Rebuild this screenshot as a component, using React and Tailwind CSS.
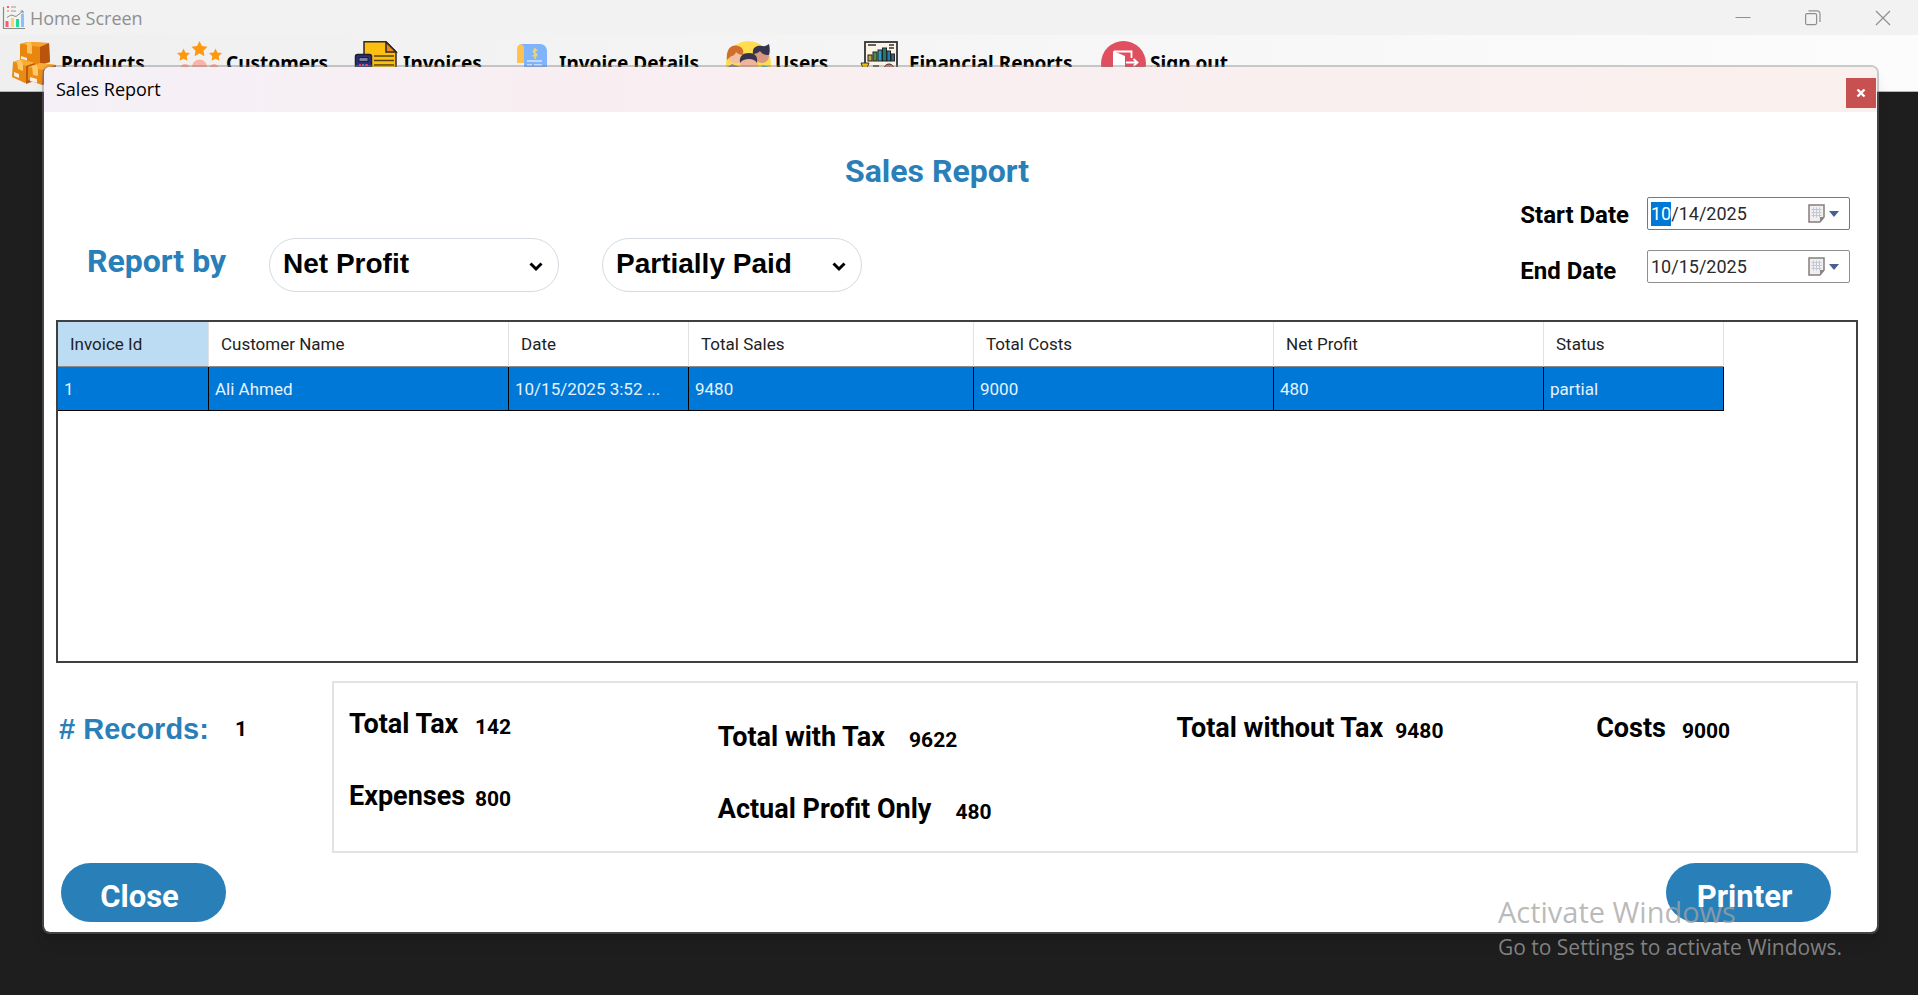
import { useEffect, useRef } from 'react';

const uiFont = "font-['Open_Sans','Noto_Sans',sans-serif]";

function AppIcon() {
  return (
    <svg width="24" height="24" viewBox="0 0 24 24" aria-hidden="true">
      <path d="M1.5 1v21.5H23" fill="none" stroke="#8a8a8a" strokeWidth="1.2" />
      <rect x="3.500" y="15" width="3" height="6" fill="#ff5a6e" />
      <rect x="9" y="12" width="3" height="9" fill="#fcd36a" />
      <rect x="14" y="13" width="3" height="8" fill="#22d89a" />
      <rect x="19" y="8" width="3" height="13" fill="#86c2ff" />
      <path d="M5 11.500l4-2.500 5 1.500 7-5.500M18.500 5H21v2.500" fill="none" stroke="#8a8a8a" />
      <path d="M5 0h2v2H5z" fill="#ff5a6e" />
      <path d="M5 4h2v2H5z" fill="#fcb75a" />
      <path d="M9 1h5M9 5h5" stroke="#9a9a9a" />
    </svg>
  );
}

function Boxes() {
  return (
    <svg width="45" height="45" viewBox="0 0 45 45" aria-hidden="true">
      <path d="M8 3l8-2 21 1 1 19-13 4-17-5z" fill="#e8860f" />
      <path d="M8 3l8-2 21 1-9 4z" fill="#f7a428" />
      <path d="M28 6l9-4 1 19-10 3z" fill="#b9540d" />
      <path d="M14 1.500l5-.5 1 5v7l-5-1V5z" fill="#ffc35a" />
      <path d="M9 15l6 2v4l-6-2z" fill="#fbeee0" />
      <path d="M1 21l9-3 13 4-1 18-9 2L0 36z" fill="#e98a13" />
      <path d="M1 21l9-3 13 4-9 3z" fill="#f9ab34" />
      <path d="M14 25l9-3-1 18-8 3z" fill="#bd5a10" />
      <path d="M5 20l4-1 2 5v6l-5-2z" fill="#ffc766" />
      <path d="M2 31l5 2v4l-5-2z" fill="#fbeee0" />
      <path d="M16 26l12-4 16 2-1 16-13 4-14-5z" fill="#ea8c15" />
      <path d="M16 26l12-4 16 2-13 5z" fill="#f9ab34" />
      <path d="M31 29l13-5-1 16-13 4z" fill="#b9540d" />
      <path d="M20 25l5-1 1 5v6l-5-1z" fill="#ffc766" />
      <path d="M18 36l7 2v4l-7-2z" fill="#fbeee0" />
    </svg>
  );
}

function Stars() {
  return (
    <svg width="45" height="45" viewBox="0 0 45 45" aria-hidden="true">
      <path d="M22.500 0l2.400 5 5.600.8-4 3.900 1 5.500-5-2.600-5 2.600 1-5.500-4-3.900 5.600-.8z" fill="#ff9811" />
      <path d="M6.500 7.500l1.900 4 4.600.6-3.300 3.200.8 4.500-4-2.100-4 2.100.8-4.500L0 12.100l4.600-.6z" fill="#ff9811" />
      <path d="M38.500 7.500l1.900 4 4.600.6-3.300 3.200.8 4.500-4-2.100-4 2.100.8-4.500-3.300-3.200 4.600-.6z" fill="#ff9811" />
      <circle cx="22.500" cy="26" r="7.500" fill="#f9b3a7" />
      <circle cx="8" cy="28" r="5" fill="#f9b3a7" />
      <circle cx="37" cy="28" r="5" fill="#f9b3a7" />
    </svg>
  );
}

function InvoiceIcon() {
  return (
    <svg width="45" height="45" viewBox="0 0 45 45" aria-hidden="true">
      <path d="M10 .8h22l10 10V44H10z" fill="#fdbf0f" stroke="#2b2a2c" strokeWidth="1.500" />
      <path d="M32 1v10h10z" fill="#f08a1c" stroke="#2b2a2c" strokeWidth="1.500" />
      <path d="M20 15h20M20 19.500h20M20 24h20" stroke="#55400a" strokeWidth="1.400" />
      <rect x="1.500" y="13.500" width="16" height="26" rx="2" fill="#2c2f7c" stroke="#1d1d33" strokeWidth="1.500" />
      <rect x="5" y="16.500" width="9" height="4" fill="#7d8396" stroke="#1d1d33" />
      <path d="M5 24h2M11 24h3" stroke="#e04646" strokeWidth="2" />
      <path d="M8 24h2" stroke="#7d8396" strokeWidth="2" />
    </svg>
  );
}

function BillIcon() {
  return (
    <svg width="45" height="45" viewBox="0 0 45 45" aria-hidden="true">
      <path d="M12 3c-4 0-5 3-5 6v13h7V8z" fill="#ffc14f" />
      <path d="M11 3h19c4 0 7 3 7 7v32H14V9c0-3-1-5-3-6z" fill="#7fb3fb" />
      <path d="M27.500 9.500c-4-2-5.500 1.800-2.500 2.800s2 4.200-2.500 2.200M25 7v11" fill="none" stroke="#e4d679" strokeWidth="1.600" />
      <path d="M17 20h15M17 24h5M24 24h8" stroke="#d8e8ff" strokeWidth="1.400" />
    </svg>
  );
}

function PeopleIcon() {
  return (
    <svg width="45" height="45" viewBox="0 0 45 45" aria-hidden="true">
      <circle cx="22.500" cy="22.500" r="22.500" fill="#ffdd4f" />
      <circle cx="10" cy="15" r="7.500" fill="#f4bf9e" />
      <path d="M1 19c-1-8 2-15 9-14.500S18 10 17 14c-3 0-5-1-7-3-1 4-5 4-6 5z" fill="#cf6f2b" />
      <circle cx="36" cy="15" r="7" fill="#d9977e" />
      <path d="M27 13c-1-6 3-9 9-8 3 .5 5-.5 7-2 1 4 1 8 0 11-4 0-7-1-9-4-2 2-4 3-7 3z" fill="#34344f" />
      <circle cx="23" cy="24" r="9" fill="#efb49a" />
      <path d="M14 22c-1-7 3-10 9-10s9 3 8 10c-2-3-4-4-8-4s-7 1-9 4z" fill="#34344f" />
      <path d="M0 27l6-4 8 3v15H6z" fill="#8b7fb0" />
      <path d="M36 24l8 2-3 12h-6z" fill="#58b7d8" />
    </svg>
  );
}

function ReportsIcon() {
  return (
    <svg width="45" height="45" viewBox="0 0 45 45" aria-hidden="true">
      <rect x="5" y="1" width="32" height="43" fill="#fbf3e6" stroke="#333" strokeWidth="1.800" />
      <path d="M8 4h8M29 4h5M29 7h5" stroke="#333" strokeWidth="1.500" />
      <rect x="8" y="14" width="4" height="6" fill="#c9a23a" stroke="#222" />
      <rect x="13" y="11" width="4" height="9" fill="#4b8f46" stroke="#222" />
      <rect x="18" y="9" width="4" height="11" fill="#2e9ac0" stroke="#222" />
      <rect x="22.500" y="7" width="4" height="13" fill="#217a70" stroke="#222" />
      <rect x="27" y="10" width="3.500" height="10" fill="#217ca8" stroke="#222" />
      <rect x="31" y="13" width="3.500" height="7" fill="#38618d" stroke="#222" />
      <path d="M1 22h8l-2 5H3z" fill="#f6c20e" stroke="#333" />
      <path d="M13 25h6M12 28h7" stroke="#333" strokeWidth="1.500" />
      <circle cx="29" cy="28" r="5" fill="#e17a6a" stroke="#333" />
    </svg>
  );
}

function SignOutIcon() {
  return (
    <svg width="45" height="45" viewBox="0 0 45 45" aria-hidden="true">
      <circle cx="22.500" cy="22.500" r="22.500" fill="#e04f5f" />
      <path d="M12 10l12 5v21l-12-5z" fill="#fff" />
      <path d="M13 10.500h17.500V17M30.500 26v5H24M25 21.500h11M32.500 18l4 3.500-4 3.500" fill="none" stroke="#fff" strokeWidth="1.800" />
    </svg>
  );
}

const menu = [
  { label: 'Products', Icon: Boxes, width: 'w-[165px]' },
  { label: 'Customers', Icon: Stars, width: 'w-[177px]' },
  { label: 'Invoices', Icon: InvoiceIcon, width: 'w-[156px]' },
  { label: 'Invoice Details', Icon: BillIcon, width: 'w-[216px]' },
  { label: 'Users', Icon: PeopleIcon, width: 'w-[134px]' },
  { label: 'Financial Reports', Icon: ReportsIcon, width: 'w-[241px]' },
  { label: 'Sign out', Icon: SignOutIcon, width: 'w-[165px]' },
];

function TitleBar() {
  return (
    <header className={`flex h-[35px] items-center bg-[#f2f2f2] pl-0.5 text-[#8f8f8f] ${uiFont}`}>
      <AppIcon />
      <span className="pl-1 text-lg leading-6">Home Screen</span>
      <div className="ml-auto flex h-full">
        <button aria-label="Minimize" className="grid w-[70px] place-items-center">
          <svg width="16" height="16" viewBox="0 0 16 16"><path d="M.5 7.500h15" stroke="#8f8f8f" /></svg>
        </button>
        <button aria-label="Restore" className="grid w-[70px] place-items-center">
          <svg width="16" height="16" viewBox="0 0 16 16" fill="none" stroke="#8f8f8f" strokeWidth="1.200">
            <rect x=".6" y="3.600" width="11" height="11" rx="1.500" />
            <path d="M3.500 .8h8.500a3 3 0 0 1 3 3V12" />
          </svg>
        </button>
        <button aria-label="Close window" className="grid w-[70px] place-items-center">
          <svg width="16" height="16" viewBox="0 0 16 16"><path d="M1 1l14 14M15 1L1 15" stroke="#8f8f8f" strokeWidth="1.200" /></svg>
        </button>
      </div>
    </header>
  );
}

function MenuBar() {
  return (
    <nav className="flex h-[57px] items-center overflow-hidden border-b border-[#b5b5b5] bg-linear-to-r from-[#efefef] to-[#fcfcfc] pl-3">
      {menu.map(({ label, Icon, width }) => (
        <button key={label} className={`flex shrink-0 items-center gap-1 ${width}`}>
          <Icon />
          <span className="whitespace-nowrap font-['Noto_Sans',sans-serif] text-[19px] leading-6 font-bold text-black">{label}</span>
        </button>
      ))}
    </nav>
  );
}

function PillSelect({ label, value, options, width }) {
  return (
    <div className={`relative ${width}`}>
      <select
        aria-label={label}
        defaultValue={value}
        className="h-[54px] w-full appearance-none rounded-full border border-[#d5dae1] bg-white pr-10 pb-0.5 pl-[13px] font-['Liberation_Sans',Arial,sans-serif] text-[28px] leading-9 font-bold text-black"
      >
        {options.map((o) => <option key={o}>{o}</option>)}
      </select>
      <svg className="pointer-events-none absolute top-6 right-4" width="14" height="10" viewBox="0 0 14 10" aria-hidden="true">
        <path d="M1.500 1.500L7 7l5.500-5.500" fill="none" stroke="#000" strokeWidth="3" />
      </svg>
    </div>
  );
}

function DateField({ id, value, active }) {
  const ref = useRef(null);
  useEffect(() => {
    if (active && ref.current) {
      ref.current.focus();
      ref.current.setSelectionRange(0, 2);
    }
  }, [active]);
  return (
    <div className={`flex h-[33px] w-[203px] items-center rounded-xs border bg-white pr-2.5 pl-[3px] ${active ? 'border-[#2a8dd8]' : 'border-[#8f8f8f]'}`}>
      <input
        id={id}
        ref={ref}
        type="text"
        defaultValue={value}
        className="min-w-0 flex-1 bg-transparent text-lg leading-6 text-[#2a2a2a] outline-none selection:bg-[#0078d7] selection:text-white"
      />
      <button aria-label={`Open calendar for ${id}`} className="flex items-center gap-1">
        <svg width="17" height="19" viewBox="0 0 17 19" aria-hidden="true">
          <path d="M1 1h15v12l-4 5H1z" fill="#f1eeee" stroke="#857d7d" strokeWidth="1.500" />
          <path d="M3.500 5.500h10M3.500 8.500h10M3.500 11.500h10M5.500 3.500v10M8.500 3.500v10M11.500 3.500v10" stroke="#c3c8d8" />
          <path d="M16 13h-4v5z" fill="#8c8585" />
        </svg>
        <svg width="10" height="6" viewBox="0 0 10 6" aria-hidden="true"><path d="M0 0h10L5 6z" fill="#475f92" /></svg>
      </button>
    </div>
  );
}

const columns = [
  { name: 'Invoice Id', value: '1', width: 'w-[151px]' },
  { name: 'Customer Name', value: 'Ali Ahmed', width: 'w-[300px]' },
  { name: 'Date', value: '10/15/2025 3:52 ...', width: 'w-[180px]' },
  { name: 'Total Sales', value: '9480', width: 'w-[285px]' },
  { name: 'Total Costs', value: '9000', width: 'w-[300px]' },
  { name: 'Net Profit', value: '480', width: 'w-[270px]' },
  { name: 'Status', value: 'partial', width: 'w-[180px]' },
];

function ReportTable() {
  return (
    <div className="h-[343px] overflow-auto border-2 border-[#404040] bg-white">
      <table className="table-fixed border-separate border-spacing-0 text-[17px] leading-6">
        <colgroup>{columns.map((c) => <col key={c.name} className={c.width} />)}</colgroup>
        <thead>
          <tr>
            {columns.map((c, i) => (
              <th key={c.name} className={`h-[45px] border-r border-b border-r-[#e2e2e2] border-b-[#8a8a8a] pl-3 text-left font-normal text-[#222] ${i === 0 ? 'bg-[#bcdcf4]' : 'bg-white'}`}>
                {c.name}
              </th>
            ))}
          </tr>
        </thead>
        <tbody>
          <tr>
            {columns.map((c) => (
              <td key={c.name} className="h-11 overflow-hidden border-r border-b border-black bg-[#0078d7] pl-1.5 whitespace-nowrap text-[#e6f2fc]">
                {c.value}
              </td>
            ))}
          </tr>
        </tbody>
      </table>
    </div>
  );
}

function Figure({ label, value, layout }) {
  return (
    <div className={`items-end whitespace-nowrap ${layout}`}>
      <dt className="text-[27px] leading-9 font-bold">{label}</dt>
      <dd className="text-[21px] leading-[30px] font-bold">{value}</dd>
    </div>
  );
}

function Summary() {
  return (
    <dl className="grid h-[172px] flex-1 grid-cols-[369fr_459fr_420fr_260fr] border-2 border-[#e2e2e2] pt-[23px] pl-[15px] text-black">
      <div className="flex flex-col gap-9">
        <Figure label="Total Tax" value="142" layout="grid grid-cols-[126px_auto] justify-start" />
        <Figure label="Expenses" value="800" layout="grid grid-cols-[126px_auto] justify-start" />
      </div>
      <div className="flex flex-col gap-9 pt-[13px]">
        <Figure label="Total with Tax" value="9622" layout="flex gap-6" />
        <Figure label="Actual Profit Only" value="480" layout="flex gap-6" />
      </div>
      <div className="pt-1"><Figure label="Total without Tax" value="9480" layout="flex gap-3" /></div>
      <div className="pt-1"><Figure label="Costs" value="9000" layout="flex gap-4" /></div>
    </dl>
  );
}

function ActionButton({ children }) {
  return (
    <button className="h-[59px] w-[165px] rounded-full bg-[#2980b9] pt-2 pr-2 text-[31px] leading-10 font-bold text-white">
      {children}
    </button>
  );
}

function SalesReportDialog() {
  return (
    <section
      role="dialog"
      aria-labelledby="dialog-title"
      className="relative -mt-[27px] mr-[39px] ml-[42px] overflow-hidden rounded-lg border-2 border-[#808080]/40 bg-white bg-clip-padding font-['Roboto',sans-serif] shadow-lg"
    >
      <div className="flex h-[45px] items-center justify-between bg-linear-to-r from-[#f5f0f7] via-[#f9eef1] via-35% to-[#faf0ed] pr-px pl-3">
        <h2 id="dialog-title" className={`pb-0.5 text-lg leading-6 text-black ${uiFont}`}>Sales Report</h2>
        <button aria-label="Close dialog" className="mt-[7px] grid size-[30px] place-items-center bg-[#c75050]">
          <svg width="10" height="8" viewBox="0 0 10 8"><path d="M1.500 .5l7 7M8.500 .5l-7 7" stroke="#fff" strokeWidth="2.400" /></svg>
        </button>
      </div>

      <div className="pr-[19px] pb-2.5 pl-3">
        <h1 className="mt-[38px] mb-[5px] pr-10 text-center text-[32px] leading-[42px] font-bold text-[#2980b9]">Sales Report</h1>

        <div className="flex h-[123px] pr-2 pl-[31px]">
          <div className="mt-[41px] flex items-start">
            <span className="w-[182px] text-[32px] leading-[46px] font-bold text-[#2980b9]">Report by</span>
            <PillSelect label="Report by" value="Net Profit" options={['Net Profit', 'Total Sales']} width="w-[290px]" />
            <div className="ml-[43px]">
              <PillSelect label="Payment status" value="Partially Paid" options={['Partially Paid', 'Paid']} width="w-[260px]" />
            </div>
          </div>
          <div className="ml-auto flex gap-[18px] text-black">
            <div className="flex flex-col gap-5 text-2xl leading-9 font-bold">
              <label htmlFor="start-date">Start Date</label>
              <label htmlFor="end-date">End Date</label>
            </div>
            <div className="flex flex-col gap-5">
              <DateField id="start-date" value="10/14/2025" active />
              <DateField id="end-date" value="10/15/2025" />
            </div>
          </div>
        </div>

        <ReportTable />

        <div className="mt-[18px] flex">
          <div className="flex w-[276px] items-center gap-[26px] self-start pt-[30px] pl-[3px]">
            <span className="font-['Liberation_Sans',Arial,sans-serif] text-[29px] leading-9 font-bold text-[#2980b9]"># Records:</span>
            <span className="text-[21px] leading-9 font-bold text-black">1</span>
          </div>
          <Summary />
        </div>

        <div className="mt-2.5 flex justify-between pr-[27px] pl-[5px]">
          <ActionButton>Close</ActionButton>
          <ActionButton>Printer</ActionButton>
        </div>
      </div>
    </section>
  );
}

export default function App() {
  return (
    <div className="relative min-h-screen bg-[#1e1e1e]">
      <TitleBar />
      <MenuBar />
      <SalesReportDialog />
      <div className={`pointer-events-none absolute right-[76px] bottom-[31px] text-[#a3a3a3]/75 ${uiFont}`}>
        <p className="text-[29px] leading-9">Activate Windows</p>
        <p className="text-[21px] leading-[34px]">Go to Settings to activate Windows.</p>
      </div>
    </div>
  );
}
